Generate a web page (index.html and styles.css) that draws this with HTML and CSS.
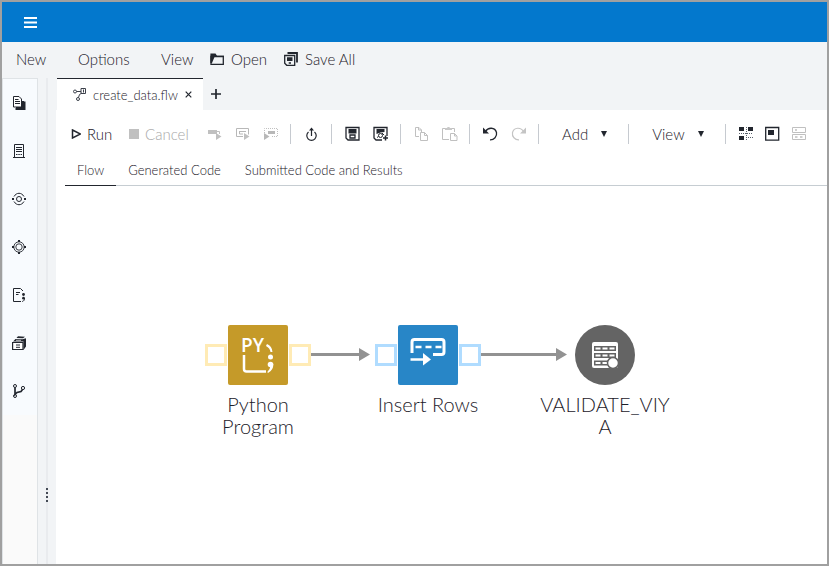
FILE: index.html
```html
<!DOCTYPE html>
<html lang="en">

<head>
    <meta charset="UTF-8">
    <meta name="viewport" content="width=device-width, initial-scale=1.0">
    <title>create_data.flw</title>
    <link rel="stylesheet" href="styles.css">
</head>

<body>

    <header class="banner">
        <button class="menu-toggle" aria-label="Application menu">
            <svg width="13" height="11" viewBox="0 0 13 11"><path d="M0 1h13M0 5.500h13M0 10h13" stroke="#fff" stroke-width="2"/></svg>
        </button>
    </header>

    <nav class="menubar">
        <button class="menu-new">New</button>
        <button class="menu-options">Options</button>
        <button class="menu-view">View</button>
        <button class="menu-open">
            <svg width="14" height="14" viewBox="0 0 14 14"><path d="M1 12.300V4.500h12.300v7.800z" fill="none" stroke="#22262e" stroke-width="1.300"/><path d="M.4 1.500H5.500L7 3.800H14V5H4.500L2 11H.4z" fill="#22262e"/></svg>
            Open
        </button>
        <button class="menu-save">
            <svg width="14" height="14" viewBox="0 0 14 14"><path d="M3.500 1h9.500v9.500" fill="none" stroke="#22262e" stroke-width="1.800"/><path d="M.7 3.500h10v9.800H2.700l-2-2z" fill="none" stroke="#22262e" stroke-width="1.300"/><path d="M3 5.200h5.500v3.800H3zM4.700 10.300h2.300v1.500H4.700z" fill="#22262e"/></svg>
            Save All
        </button>
    </nav>

    <div class="workspace">
        <aside class="rail">
            <nav class="rail-items">
                <button aria-label="Open files">
                    <svg width="14" height="14" viewBox="0 0 14 14"><path d="M3.500 13h9V5.500M4 12h7V5" fill="none" stroke="#22262e" stroke-width="2"/><path d="M1.500.5H7L9.500 3v8h-8z" fill="#fff" stroke="#22262e"/><path d="M3 3.500h3.500M3 5.500h5M3 7.500h5" stroke="#22262e"/></svg>
                </button>
                <button aria-label="Steps">
                    <svg width="14" height="14" viewBox="0 0 14 14"><path d="M2.500 13V.5h9V13M1 13.500h12M4 3.500h6M4 5.500h6M4 7.500h6" fill="none" stroke="#22262e"/><path d="M4 10.500h6" stroke="#22262e" stroke-dasharray="1.500 .8"/></svg>
                </button>
                <button aria-label="Explorer">
                    <svg width="14" height="14" viewBox="0 0 14 14"><g fill="none" stroke="#22262e"><circle cx="7" cy="7" r="2.500"/><path d="M2 4.500C4.500.2 9.500.2 12 4.500M2 9.500C4.500 13.800 9.500 13.800 12 9.500"/></g><path d="M0 6h2v2H0zM12 6h2v2h-2z" fill="#22262e"/></svg>
                </button>
                <button aria-label="Libraries">
                    <svg width="14" height="14" viewBox="0 0 14 14"><g fill="none" stroke="#22262e"><circle cx="7" cy="7" r="3.200" stroke-width=".9"/><circle cx="7" cy="7" r="5.200" stroke-width=".9"/></g><path d="M0 6h2v2H0zM12 6h2v2h-2zM6 0h2v2H6zM6 12h2v2H6z" fill="#22262e"/></svg>
                </button>
                <button aria-label="Snippets">
                    <svg width="14" height="14" viewBox="0 0 14 14"><path d="M9 13.500H1.500V.5H8.500L11 3M4 4.500h4M4 6.500h2.500" fill="none" stroke="#22262e"/><circle cx="11.500" cy="6.500" r="1.400" fill="#22262e"/><circle cx="11.500" cy="10.200" r="1.400" fill="#22262e"/><path d="M12.500 10c0 2-.5 3-2.300 3.500" fill="none" stroke="#22262e"/></svg>
                </button>
                <button aria-label="File shortcuts">
                    <svg width="14" height="14" viewBox="0 0 14 14"><path d="M.6 6.500h10.400v7H.6z" fill="#fff" stroke="#22262e" stroke-width="1.200"/><path d="M1 5.500L3.500 3l7 .2 3.500-1v8.300L11.500 14V5.500zM4.500 2L6 .3l7 .5-2 1.500z" fill="#22262e"/><path d="M4 4.300h5" stroke="#fff" stroke-width=".7"/><path d="M4 9h4M4 11.300h4" stroke="#22262e"/></svg>
                </button>
                <button aria-label="Git repositories">
                    <svg width="14" height="14" viewBox="0 0 14 14"><g fill="none" stroke="#22262e"><circle cx="3" cy="2" r="1.500"/><circle cx="3" cy="12" r="1.500"/><circle cx="11" cy="4" r="1.600"/><path d="M3 3.500v7L5 8.500 9 7.500 10.500 5.500" stroke-width="1.700"/></g></svg>
                </button>
            </nav>
        </aside>

        <div class="splitter"><span class="grip"></span></div>

        <main class="editor">
            <div class="file-tabs">
                <div class="file-tab">
                    <svg width="13" height="13" viewBox="0 0 13 13"><g fill="none" stroke="#3c414b"><circle cx="2" cy="3.500" r="1.500"/><circle cx="5" cy="11" r="1.500"/><path d="M8 .5h4.500v5H8zM3.500 3.500H8M5.500 9.500l1-3L9 5"/></g><path d="M10 1.500h1v3h-1z" fill="#3c414b"/></svg>
                    <span>create_data.flw</span>
                    <button class="close" aria-label="Close tab">
                        <svg width="7" height="7" viewBox="0 0 7 7"><path d="M.7.7l5.600 5.600M6.300.7L.7 6.300" stroke="#22262e" stroke-width="1.200"/></svg>
                    </button>
                </div>
                <button class="add-tab" aria-label="New tab">
                    <svg width="10" height="10" viewBox="0 0 10 10"><path d="M5 0v10M0 5h10" stroke="#22262e" stroke-width="1.700"/></svg>
                </button>
            </div>

            <div class="toolbar">
                <button class="run">
                    <svg width="10" height="10" viewBox="0 0 10 10"><path d="M1.500 1l8 4-8 4z" fill="none" stroke="#22262e" stroke-width="1.500"/></svg>
                    Run
                </button>
                <button class="cancel" disabled>
                    <svg width="10" height="10" viewBox="0 0 10 10"><path d="M0 0h10v10H0z" fill="#c0c0c0"/></svg>
                    Cancel
                </button>
                <div class="group">
                    <button disabled aria-label="Run node">
                        <svg width="16" height="16" viewBox="0 0 16 16"><path d="M1 4h9v4H1zM9 7l5.500 3.500L9 14z" fill="#c0c0c0"/><path d="M10 5.500h2.500V8" fill="none" stroke="#c0c0c0"/></svg>
                    </button>
                    <button disabled aria-label="Run from node">
                        <svg width="16" height="16" viewBox="0 0 16 16"><path d="M8 10.500H1.500v-8h12v6M4 5.500h7M4.500 5v3H8" fill="none" stroke="#b8b8b8"/><path d="M9 7l5.500 3.500L9 14z" fill="#c0c0c0"/></svg>
                    </button>
                    <button disabled aria-label="Run to node">
                        <svg width="16" height="16" viewBox="0 0 16 16"><path d="M5 5h7v3H5zM1 7l5.500 3.500L1 14z" fill="#b8b8b8"/><path d="M1.500 7V2.500h13v8H8" fill="none" stroke="#c0c0c0" stroke-dasharray="1 1"/></svg>
                    </button>
                </div>
                <span class="sep"></span>
                <button aria-label="Export">
                    <svg width="16" height="16" viewBox="0 0 16 16"><path d="M4.500 6a4.700 4.700 0 1 0 6 0M7.500 10V3" fill="none" stroke="#22262e" stroke-width="1.200"/><path d="M5 4.500l2.500-3 2.500 3z" fill="#22262e"/></svg>
                </button>
                <span class="sep"></span>
                <div class="group">
                    <button aria-label="Save">
                        <svg width="16" height="16" viewBox="0 0 16 16"><path d="M1 1.500h13v12.500H3L1 12zM5 9h5v3H5z" fill="none" stroke="#22262e" stroke-width="1.300"/><path d="M3.500 3h8v4.500h-8z" fill="#22262e"/></svg>
                    </button>
                    <button aria-label="Save as">
                        <svg width="16" height="16" viewBox="0 0 16 16"><path d="M9 14H3L1 12V1.500h13V10" fill="none" stroke="#22262e" stroke-width="1.300"/><path d="M3.500 3h8v3l-4 .5-4 1.500z" fill="#22262e"/><circle cx="7.500" cy="9.500" r="2" fill="none" stroke="#22262e"/><path d="M4 11.500l1.500-1M9 7l2 2" stroke="#22262e"/><path d="M12.500 9.500v5M10 12h5" stroke="#22262e" stroke-width="1.500"/></svg>
                    </button>
                </div>
                <span class="sep"></span>
                <div class="group">
                    <button disabled aria-label="Copy">
                        <svg width="16" height="16" viewBox="0 0 16 16"><path d="M5 10.500H1.500v-9H5l2.500 2.500v2M6.500 6.500h4l3 3v5h-7zM10.500 6.500v3h3M4.500 1.500V4h3" fill="none" stroke="#c0c0c0"/></svg>
                    </button>
                    <button disabled aria-label="Paste">
                        <svg width="16" height="16" viewBox="0 0 16 16"><path d="M7 13.500H.5v-11h12V6M8.500 7.500h4l2.500 2.500v4.500H8.500zM12.500 7.500V10h2" fill="none" stroke="#c0c0c0"/><path d="M3 4V2h2c0-1.500 3-1.500 3 0h2v2z" fill="#c8c8c8"/></svg>
                    </button>
                </div>
                <span class="sep"></span>
                <div class="group">
                    <button aria-label="Undo">
                        <svg width="16" height="16" viewBox="0 0 16 16"><path d="M2.500 5.500C5 1 12 1 13.500 6.500c.8 4-2.500 7.500-6.500 7.300" fill="none" stroke="#22262e" stroke-width="1.300"/><path d="M0 1.500v6h6z" fill="#22262e"/></svg>
                    </button>
                    <button disabled aria-label="Redo">
                        <svg width="16" height="16" viewBox="0 0 16 16"><path d="M12.500 5.500C10 1 3 1 1.500 6.500c-.8 4 2.500 7.500 6.500 7.300" fill="none" stroke="#c4c4c4" stroke-width="1.200"/><path d="M15 1.500v6H9z" fill="#c4c4c4"/></svg>
                    </button>
                </div>
                <span class="sep"></span>
                <button class="dropdown">Add
                    <svg width="6" height="6" viewBox="0 0 6 6"><path d="M0 0h6L3 6z" fill="#22262e"/></svg>
                </button>
                <span class="sep"></span>
                <button class="dropdown">View
                    <svg width="6" height="6" viewBox="0 0 6 6"><path d="M0 0h6L3 6z" fill="#22262e"/></svg>
                </button>
                <span class="sep"></span>
                <div class="group layout">
                    <button aria-label="Arrange nodes">
                        <svg width="16" height="16" viewBox="0 0 16 16"><path d="M0 1h5v4H0zM9 1h5v4H9zM0 10h5v4H0z" fill="#22262e"/><path d="M0 7.500h14M7.500 1v13M9 11.500h5" stroke="#58606a" stroke-dasharray="1 1"/></svg>
                    </button>
                    <button aria-label="Overview map">
                        <svg width="16" height="16" viewBox="0 0 16 16"><path d="M.7 1.500h13v12.700H.7z" fill="none" stroke="#22262e" stroke-width="1.300"/><path d="M3 4h6v5H3z" fill="#22262e"/></svg>
                    </button>
                    <button disabled aria-label="Node details">
                        <svg width="16" height="16" viewBox="0 0 16 16"><path d="M1.500 1.500h13v5h-13zM1.500 8.500h13v5h-13z" fill="none" stroke="#c0c0c0"/><path d="M4 4h2M4 11h2.500M9 11h2.500" stroke="#c0c0c0" stroke-width="1.500"/></svg>
                    </button>
                </div>
            </div>

            <div class="view-tabs">
                <button class="selected">Flow</button>
                <button>Generated Code</button>
                <button>Submitted Code and Results</button>
            </div>

            <div class="canvas">
                <svg class="links" width="520" height="200" viewBox="0 0 520 200">
                    <path d="M254 168.500h50M425 168.500h76" stroke="#929292" stroke-width="3"/>
                    <path d="M303 162l11 6.500-11 6.500zM500 162l11 6.500-11 6.500z" fill="#929292"/>
                </svg>

                <div class="node python">
                    <div class="shape">
                        <span class="port"></span>
                        <div class="tile">
                            <svg width="60" height="60" viewBox="0 0 60 60"><text class="py" x="13" y="27">PY</text><path d="M16 30v14q0 2.500 2.500 2.500H38" fill="none" stroke="#fff" stroke-width="2.500"/><path d="M39 19q5 2 5.500 8h-2q-.5-4-4.500-6z" fill="#fff"/><circle cx="42.500" cy="32" r="2.500" fill="#fff"/><circle cx="42.500" cy="39.500" r="2.800" fill="#fff"/><path d="M45.200 39q.5 6-5.200 9l-.7-1q3-2.500 3-6z" fill="#fff"/></svg>
                        </div>
                        <span class="port"></span>
                    </div>
                    <div class="label">Python Program</div>
                </div>

                <div class="node insert">
                    <div class="shape">
                        <span class="port"></span>
                        <div class="tile">
                            <svg width="60" height="60" viewBox="0 0 60 60"><path d="M14 28V17q0-2.500 2.500-2.500h27q2.500 0 2.500 2.500v10q0 2.500-2.500 2.500H35" fill="none" stroke="#fff" stroke-width="3"/><path d="M17.500 22h26" stroke="#fff" stroke-width="2.500" stroke-dasharray="6 4"/><path d="M12.500 34.500h14" stroke="#fff" stroke-width="2.500"/><path d="M25 28l8 6.500-8 6z" fill="#fff"/></svg>
                        </div>
                        <span class="port"></span>
                    </div>
                    <div class="label">Insert Rows</div>
                </div>

                <div class="node table">
                    <div class="shape">
                        <div class="tile">
                            <svg width="60" height="60" viewBox="0 0 60 60"><rect x="17" y="17" width="26" height="26" rx="2" fill="#fff"/><path d="M19 23.500h22M19 30.500h22M19 38h18" stroke="#646464" stroke-width="5"/><path d="M20.500 23.500h20M20.500 30.500h20M20.500 38h14" stroke="#fff" stroke-width="2" stroke-dasharray="5 2"/><circle cx="38" cy="38" r="5.500" fill="#fff" stroke="#646464" stroke-width="1.500"/></svg>
                        </div>
                    </div>
                    <div class="label">VALIDATE_VIYA</div>
                </div>
            </div>
        </main>
    </div>

</body>

</html>
```

FILE: styles.css
```css
* {
    box-sizing: border-box;
}

body {
    font-family: Lato, "Open Sans", sans-serif;
    font-size: 15px;
    font-weight: 300;
    color: #1c2029;
    background-color: #fff;
    margin: 0;
    min-height: 100vh;
    border: 2px solid #a0a0a0;
    display: flex;
    flex-direction: column;
}

button {
    font: inherit;
    color: inherit;
    background: none;
    border: none;
    padding: 0;
    display: flex;
    align-items: center;
    white-space: nowrap;
    cursor: pointer;
}

button:disabled {
    color: #a8a8a8;
    cursor: default;
}

svg {
    display: block;
    flex: none;
}

.banner {
    height: 40px;
    padding-left: 22px;
    background-color: #0378cd;
    display: flex;
    align-items: center;
}

.menubar {
    height: 36px;
    padding: 0 0 2px 14px;
    background-color: #f2f4f6;
    display: flex;
}

.menu-new {
    width: 62px;
}

.menu-options {
    width: 83px;
}

.menu-view {
    width: 49px;
}

.menu-open {
    width: 74px;
    gap: 7px;
}

.menu-save {
    gap: 7px;
}

.workspace {
    flex: 1;
    display: flex;
}

.rail {
    width: 36px;
    flex: none;
    background-color: #fafafa;
    border: 1px solid #dfe3e6;
    border-bottom: none;
}

.rail-items {
    background-color: #f8fbfe;
    padding-right: 2px;
}

.rail-items button {
    width: 100%;
    height: 48px;
    justify-content: center;
}

.splitter {
    width: 18px;
    flex: none;
    background: linear-gradient(#e9ebee, #e9ebee) center / 2px 100% no-repeat #f2f4f6;
    display: flex;
    justify-content: center;
    align-items: flex-end;
    padding-bottom: 62px;
}

.grip {
    width: 2px;
    height: 14px;
    background: repeating-linear-gradient(#444a55 0 2px, transparent 2px 4px);
}

.editor {
    flex: 1;
    min-width: 0;
    display: flex;
    flex-direction: column;
}

.file-tabs {
    height: 32px;
    padding-left: 1px;
    background-color: #f2f4f6;
    display: flex;
}

.file-tab {
    width: 146px;
    padding-left: 16px;
    background-color: #fff;
    border-top: 1px solid #22262e;
    display: flex;
    align-items: center;
    font-size: 13px;
}

.file-tab span {
    margin: 0 7px;
}

.add-tab {
    padding-left: 8px;
}

.toolbar {
    height: 48px;
    padding-left: 15px;
    display: flex;
    align-items: center;
}

.run {
    width: 58px;
    gap: 6px;
}

.cancel {
    width: 78px;
    gap: 6px;
}

.group {
    display: flex;
    gap: 12px;
}

.group.layout {
    gap: 10px;
}

.sep {
    width: 1px;
    height: 20px;
    margin: 0 13px 0 11px;
    background-color: #c6cad0;
}

.dropdown {
    padding: 0 10px;
    gap: 13px;
}

.view-tabs {
    height: 28px;
    margin-left: 9px;
    border-bottom: 1px solid #c6cdd2;
    display: flex;
    font-size: 13px;
}

.view-tabs button {
    padding: 0 12px 3px;
    margin-bottom: -1px;
    border-bottom: 1px solid transparent;
}

.view-tabs .selected {
    border-color: #22262e;
}

.canvas {
    flex: 1;
    min-height: 300px;
    position: relative;
    overflow: hidden;
}

.links {
    position: absolute;
    left: 0;
    top: 0;
}

.node {
    position: absolute;
    top: 139px;
    width: 132px;
    text-align: center;
}

.python {
    left: 136px;
}

.insert {
    left: 306px;
}

.table {
    left: 483px;
}

.shape {
    display: flex;
    justify-content: center;
    align-items: center;
    gap: 1px;
}

.tile {
    width: 60px;
    height: 60px;
    border-radius: 2px;
}

.python .tile {
    background-color: #c59a29;
}

.insert .tile {
    background-color: #2886c7;
}

.table .tile {
    background-color: #646464;
    border-radius: 50%;
}

.port {
    width: 22px;
    height: 22px;
    border: 3px solid #ffebb5;
}

.insert .port {
    border-color: #b0dcff;
}

.py {
    font-family: "Open Sans", sans-serif;
    font-size: 19px;
    font-weight: 600;
    fill: #fff;
}

.label {
    margin-top: 8px;
    font-size: 20px;
    line-height: 22px;
    overflow-wrap: anywhere;
}

.python .label {
    padding: 0 20px;
}
```
